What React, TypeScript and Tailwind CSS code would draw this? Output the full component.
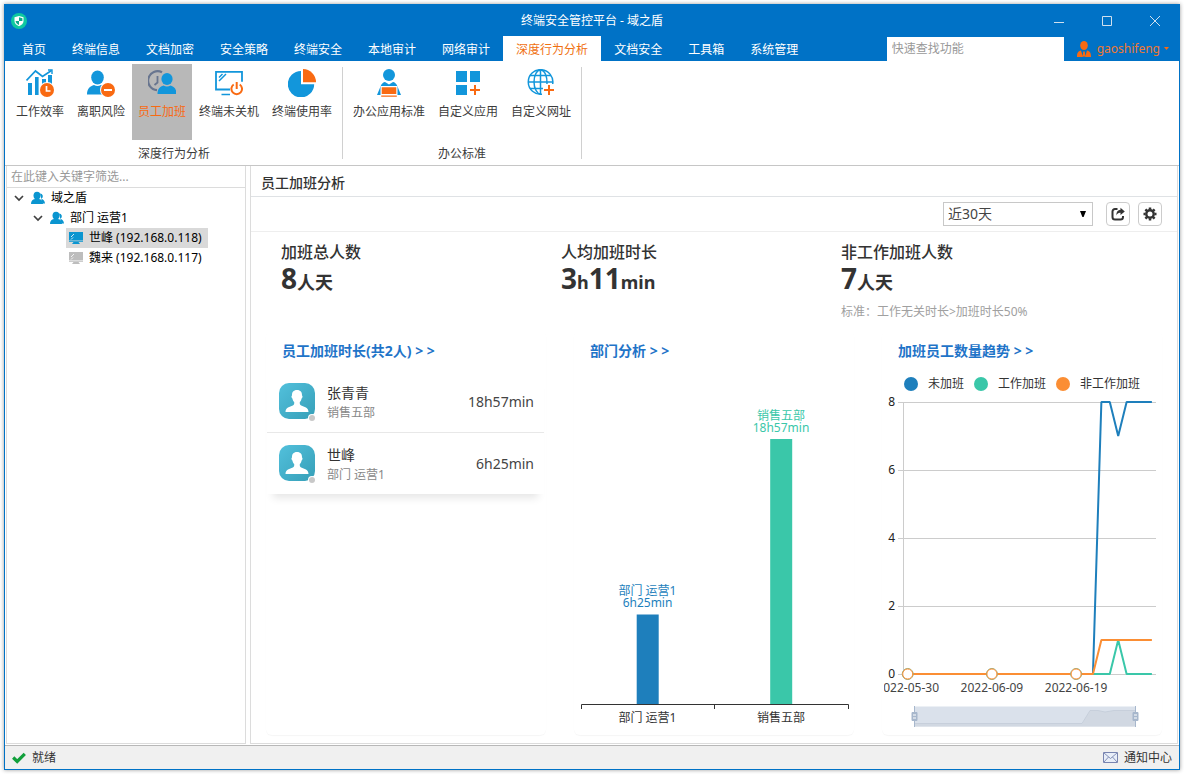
import { useState } from "react";
import type { ReactNode } from "react";

const BLUE = "#1296db";
const ORANGE = "#f96a12";

/* ---------- ribbon icons ---------- */

function Glyph({ children }: { children: ReactNode }) {
  return (
    <svg viewBox="0 0 28 28" className="size-7" aria-hidden="true">
      {children}
    </svg>
  );
}

const EfficiencyIcon = () => (
  <Glyph>
    <path d="M.5 11.500 9.500 2l7 5.500L25.500 1.500" fill="none" stroke={BLUE} strokeWidth="1.700" />
    <path d="M22 1h4v4" fill="none" stroke={BLUE} strokeWidth="1.400" />
    <path d="M2 14h4v12H2zM9 8h3.600v18H9zM16 10h4v8h-4zM22 6h4v12h-4z" fill={BLUE} />
    <circle cx="21" cy="21" r="8" fill="#fff" />
    <circle cx="21" cy="21" r="7" fill={ORANGE} />
    <path d="M20.500 17v5h4" fill="none" stroke="#fff" strokeWidth="1.700" />
  </Glyph>
);

const ResignIcon = () => (
  <Glyph>
    <ellipse cx="10.500" cy="8.500" rx="6.300" ry="7" fill={BLUE} />
    <path d="M0 25.500c0-5.500 3-8.500 7-9.500q3.500 2 7 0c4 1 7 4 7 9.500z" fill={BLUE} />
    <circle cx="21" cy="21" r="8" fill="#fff" />
    <circle cx="21" cy="21" r="7" fill={ORANGE} />
    <path d="M17 21h8" stroke="#fff" strokeWidth="2" />
  </Glyph>
);

const OvertimeIcon = () => (
  <Glyph>
    <path d="M14 3.300A9.500 9.500 0 1 0 9 21.200" fill="none" stroke="#68758f" strokeWidth="2.200" />
    <path d="M9.500 7v6.500L6.500 16" fill="none" stroke="#68758f" strokeWidth="1.800" />
    <ellipse cx="19" cy="10" rx="5.600" ry="6" fill={BLUE} />
    <path d="M9.500 25c0-5 2.500-7.700 6-8.500q3.500 1.800 7 0c3.500.8 6 3.500 6 8.500z" fill={BLUE} />
  </Glyph>
);

const PowerMonitorIcon = () => (
  <Glyph>
    <path d="M15 20.500H1V2.800h26v10" fill="none" stroke={BLUE} strokeWidth="1.800" />
    <path d="M4 12l7-7M4 8.500l3.500-3.500M6.500 25.500H15" fill="none" stroke={BLUE} strokeWidth="1.500" />
    <path d="M18.700 15.500a5.300 5.300 0 1 0 6 0" fill="none" stroke={ORANGE} strokeWidth="2" />
    <path d="M21.700 13v7" stroke={ORANGE} strokeWidth="2" />
  </Glyph>
);

const PieIcon = () => (
  <Glyph>
    <path d="M13 2v13.300h13.200A13.200 13.200 0 1 1 13 2z" fill={BLUE} />
    <path d="M15 0a13.200 13.200 0 0 1 13 13.200H15z" fill={ORANGE} />
  </Glyph>
);

const OfficeIcon = () => (
  <Glyph>
    <circle cx="14" cy="6" r="6" fill={BLUE} />
    <path d="M2 26l3.500-8.500c1-3 3-4.500 4.500-4.500l4 2.500 4-2.500c1.500 0 3.500 1.500 4.500 4.500L26 26z" fill={BLUE} />
    <path d="M5.500 17h17v9.500h-17z" fill="#fff" />
    <path d="M6.700 18.200h14.600V25H6.700zM6.200 26.400h15.600v1.400H6.200z" fill={ORANGE} />
  </Glyph>
);

const AppsIcon = () => (
  <Glyph>
    <path d="M2 2h11v11H2zM16 2h10v11H16zM2 16h11v10H2z" fill={BLUE} />
    <path d="M16 21h10M21 16v10" stroke={ORANGE} strokeWidth="2" />
  </Glyph>
);

const GlobeIcon = () => (
  <Glyph>
    <g fill="none" stroke={BLUE} strokeWidth="1.500">
      <path d="M25.700 15A12.300 12.300 0 1 0 15 25.200" />
      <path d="M20 15c.4-8-2.500-14-6.500-14S7 7 7 13s3 12 6.500 12M13.500 1v24M1 13h25M3 6.500h21M3 19.500h13" />
    </g>
    <path d="M17 21h10M22 16v10" stroke={ORANGE} strokeWidth="2" />
  </Glyph>
);

/* ---------- small icons ---------- */

const PeopleIcon = () => (
  <svg viewBox="0 0 14 14" className="size-3.5 shrink-0" aria-hidden="true">
    <path d="M9 2.500a2.800 2.800 0 0 1 1.500 5.200c2 .6 3.300 2.300 3.500 4.800h-2.500" fill="#0a95d0" />
    <ellipse cx="6" cy="4.600" rx="3.500" ry="3.900" fill="#0a95d0" />
    <path d="M0 13c0-3 1.500-4.500 4-5h4c2.500.5 4 2 4 5z" fill="#0a95d0" />
  </svg>
);

const PcIcon = ({ color }: { color: string }) => (
  <svg viewBox="0 0 14 12" className="h-3 w-3.5 shrink-0" aria-hidden="true">
    <path d="M0 0h14v8.500H0zM0 9.200h14v.8H9.500l1.500 2H3l1.500-2H0z" fill={color} />
    <path d="M2 5l3-3M2 7.500l2-2" stroke="#fff" strokeWidth=".8" />
  </svg>
);

const Chevron = () => (
  <svg viewBox="0 0 10 10" className="size-2.5 shrink-0" aria-hidden="true">
    <path d="M1 3l4 4 4-4" fill="none" stroke="#404040" strokeWidth="1.700" />
  </svg>
);

/* ---------- data ---------- */

const tabs = ["首页", "终端信息", "文档加密", "安全策略", "终端安全", "本地审计", "网络审计", "深度行为分析", "文档安全", "工具箱", "系统管理"];

const groups = [
  {
    title: "深度行为分析",
    items: [
      { label: "工作效率", Icon: EfficiencyIcon },
      { label: "离职风险", Icon: ResignIcon },
      { label: "员工加班", Icon: OvertimeIcon },
      { label: "终端未关机", Icon: PowerMonitorIcon },
      { label: "终端使用率", Icon: PieIcon },
    ],
  },
  {
    title: "办公标准",
    items: [
      { label: "办公应用标准", Icon: OfficeIcon },
      { label: "自定义应用", Icon: AppsIcon },
      { label: "自定义网址", Icon: GlobeIcon },
    ],
  },
];

const people = [
  { name: "张青青", dept: "销售五部", time: "18h57min" },
  { name: "世峰", dept: "部门 运营1", time: "6h25min" },
];

const legend = [
  { label: "未加班", dot: "size-3.5 rounded-full bg-[#1e7fbc]" },
  { label: "工作加班", dot: "size-3.5 rounded-full bg-[#3ac7a9]" },
  { label: "非工作加班", dot: "size-3.5 rounded-full bg-[#fb8e34]" },
];

/* ---------- window chrome ---------- */

function TitleBar() {
  return (
    <div className="grid h-[31px] grid-cols-[1fr_auto_1fr] items-center text-white">
      <svg viewBox="0 0 16 16" className="ml-1.5 size-4" aria-hidden="true">
        <circle cx="8" cy="8" r="8" fill="#0fc8a0" />
        <path d="M8 3l4.500 1.300V8c0 2.600-2 4.200-4.500 5.300C5.500 12.200 3.500 10.600 3.500 8V4.300z" fill="#fff" />
        <path d="M8 4.200l3.400 1V8H8zM8 8v4C6 11 4.600 9.800 4.600 8z" fill="#0fa98c" />
      </svg>
      <h1>终端安全管控平台 - 域之盾</h1>
      <div className="flex justify-end">
        <button aria-label="最小化" className="flex h-[31px] w-12 items-center justify-center">
          <svg viewBox="0 0 12 12" className="size-3"><path d="M1 7.500h10" stroke="#d0e0ee" /></svg>
        </button>
        <button aria-label="最大化" className="flex h-[31px] w-12 items-center justify-center">
          <svg viewBox="0 0 12 12" className="size-3"><path d="M1.500 1.500h9v9h-9z" fill="none" stroke="#d0e0ee" /></svg>
        </button>
        <button aria-label="关闭" className="flex h-[31px] w-12 items-center justify-center">
          <svg viewBox="0 0 12 12" className="size-3"><path d="M1 1l10 10M11 1L1 11" stroke="#d0e0ee" /></svg>
        </button>
      </div>
    </div>
  );
}

function TabBar({ active, onSelect }: { active: string; onSelect: (t: string) => void }) {
  return (
    <div className="flex h-[25px] items-stretch pl-1">
      <nav className="flex">
        {tabs.map((t) => (
          <button
            key={t}
            onClick={() => onSelect(t)}
            className={t === active ? "bg-white px-[13px] pt-0.5 text-[#f07010]" : "px-[13px] pt-0.5 text-white"}
          >
            {t}
          </button>
        ))}
      </nav>
      <input
        aria-label="快速查找功能"
        placeholder="快速查找功能"
        className="mt-px ml-auto w-[177px] bg-white px-[5px] outline-none placeholder:text-[#999]"
      />
      <button className="ml-[13px] flex items-center pr-2.5 text-[#f07830]">
        <svg viewBox="0 0 14 16" className="mr-1.5 h-4 w-3.5" aria-hidden="true">
          <ellipse cx="7" cy="4.500" rx="3.800" ry="4.500" fill={ORANGE} />
          <path d="M0 16c0-4 1-6 4-6.500L6 16zM14 16c0-4-1-6-4-6.500L8 16zM6.200 10.500h1.600L8.300 15 7 16l-1.300-1z" fill={ORANGE} />
        </svg>
        gaoshifeng
        <svg viewBox="0 0 5 3" className="ml-1 h-[3px] w-[5px]" aria-hidden="true"><path d="M0 0h5L2.500 3z" fill={ORANGE} /></svg>
      </button>
    </div>
  );
}

function Ribbon() {
  const [active, setActive] = useState("员工加班");
  return (
    <div className="flex h-[105px] border-b border-[#c6c6c6] bg-white pl-px text-[#3c3c3c]">
      {groups.map((g) => (
        <section key={g.title} className="my-1.5 flex border-r border-[#d0d0d0] px-1">
          <div className="-mt-[3px] flex flex-col">
            <div className="flex gap-px">
              {g.items.map(({ label, Icon }) => (
                <button
                  key={label}
                  onClick={() => setActive(label)}
                  className={
                    label === active
                      ? "flex h-[76px] flex-col items-center bg-[#b8b8b8] px-1.5 pt-[5px] text-[#f96a12]"
                      : "flex h-[76px] flex-col items-center px-1.5 pt-[5px]"
                  }
                >
                  <Icon />
                  <span className="mt-1.5 leading-[18px]">{label}</span>
                </button>
              ))}
            </div>
            <h2 className="mt-1 text-center leading-[20px]">{g.title}</h2>
          </div>
        </section>
      ))}
    </div>
  );
}

/* ---------- left tree ---------- */

function Sidebar() {
  return (
    <aside className="w-60 shrink-0 border-x border-b border-[#dcdcdc]">
      <input
        aria-label="在此键入关键字筛选"
        placeholder="在此键入关键字筛选..."
        className="block h-[22px] w-full border-b border-[#dcdcdc] px-1 outline-none placeholder:text-[#999]"
      />
      <ul className="leading-5 text-black">
        <li>
          <button className="flex h-5 items-center pl-[7px]">
            <Chevron />
            <span className="ml-[7px] flex items-center gap-1.5"><PeopleIcon />域之盾</span>
          </button>
          <ul>
            <li>
              <button className="flex h-5 items-center pl-[26px]">
                <Chevron />
                <span className="ml-[7px] flex items-center gap-1.5"><PeopleIcon />部门 运营1</span>
              </button>
              <ul className="pl-[59px]">
                <li>
                  <button className="flex h-5 items-center gap-1.5 bg-[#d9d9d9] pr-1.5 pl-[3px]">
                    <PcIcon color="#0a95d0" />世峰 (192.168.0.118)
                  </button>
                </li>
                <li>
                  <button className="flex h-5 items-center gap-1.5 pr-1.5 pl-[3px]">
                    <PcIcon color="#bdbdbd" />魏来 (192.168.0.117)
                  </button>
                </li>
              </ul>
            </li>
          </ul>
        </li>
      </ul>
    </aside>
  );
}

/* ---------- analysis panel ---------- */

function Card({ title, children }: { title: string; children: ReactNode }) {
  return (
    <section className="flex flex-col rounded-md shadow-[0_1px_1px_rgba(0,0,0,0.04)]">
      <h3 className="flex h-[42px] items-center px-4 text-sm font-bold text-[#1f74c8]">
        <a href="#">{title}</a>
      </h3>
      {children}
    </section>
  );
}

function Avatar() {
  return (
    <svg viewBox="0 0 38 38" className="size-[38px] shrink-0" aria-hidden="true">
      <defs>
        <linearGradient id="avatar" x1="0" y1="0" x2="1" y2="1">
          <stop offset="0" stopColor="#52c0dc" />
          <stop offset="1" stopColor="#369fb8" />
        </linearGradient>
      </defs>
      <rect width="36" height="36" rx="10" fill="url(#avatar)" />
      <path
        d="M18 7c3.600 0 5.200 2.300 5 5.500.8.200.7 2.300-.4 3-.4 1.800-1 2.800-1.800 3.600-.2 2 .2 2.900 1.400 3.500 3 1.300 7.300 2 7.300 6.400H6.500c0-4.400 4.300-5.100 7.300-6.400 1.200-.6 1.600-1.500 1.400-3.500-.8-.8-1.400-1.800-1.800-3.600-1.100-.7-1.200-2.800-.4-3-.2-3.200 1.400-5.500 5-5.500z"
        fill="#fff"
      />
      <circle cx="33" cy="35" r="4" fill="#fff" />
      <circle cx="33" cy="35" r="3" fill="#c8c8c8" />
    </svg>
  );
}

function PeopleList() {
  return (
    <ul className="mr-0.5 ml-px shadow-[0_10px_8px_-6px_rgba(0,0,0,0.1)]">
      {people.map((p, i) => (
        <li
          key={p.name}
          className={
            i === 0
              ? "flex h-[61px] items-center border-b border-[#e8e8e8] pr-2.5 pl-3"
              : "flex h-[61px] items-center pr-2.5 pl-3"
          }
        >
          <Avatar />
          <div className="ml-2.5 pt-0.5 leading-5">
            <p className="text-sm leading-5 text-[#333]">{p.name}</p>
            <p className="text-[#888]">{p.dept}</p>
          </div>
          <span className="ml-auto text-sm text-[#444]">{p.time}</span>
        </li>
      ))}
    </ul>
  );
}

function BarChart() {
  return (
    <svg viewBox="0 0 280 363" className="w-full" fontSize="12" textAnchor="middle" role="img" aria-label="部门分析">
      <rect x="62.700" y="242.500" width="22" height="90" fill="#1e7fbc" />
      <rect x="196.200" y="67" width="22" height="265.500" fill="#3ac7a9" />
      <path d="M7.500 337v-4.500h267v4.500M140.500 332.500v4.500" fill="none" stroke="#333" />
      <g fill="#1e7fbc">
        <text x="73.500" y="223">部门 运营1</text>
        <text x="73.500" y="235">6h25min</text>
      </g>
      <g fill="#3ac7a9">
        <text x="207" y="48">销售五部</text>
        <text x="207" y="60">18h57min</text>
      </g>
      <g fill="#333">
        <text x="73.500" y="350">部门 运营1</text>
        <text x="207" y="350">销售五部</text>
      </g>
    </svg>
  );
}

const px = (i: number) => 21.5 + 8.42 * (i + 0.5);
const py = (v: number) => 302 - 34 * v;
const line = (values: number[]) => values.map((v, i) => `${px(i)},${py(v)}`).join(" ");
const zeros = (n: number): number[] => Array(n).fill(0);

const noOvertime = [...zeros(23), 8, 8, 7, 8, 8, 8, 8];
const workOvertime = [...zeros(25), 1, 0, 0, 0, 0];
const idleOvertime = [...zeros(23), 1, 1, 1, 1, 1, 1, 1];

function TrendChart() {
  return (
    <svg viewBox="0 24 280 339" className="w-full" fontSize="12" role="img" aria-label="加班员工数量趋势">
      <clipPath id="plot"><path d="M2 0h278v363H2z" /></clipPath>
      <g stroke="#ccc">
        {[8, 6, 4, 2, 0].map((v) => (
          <path key={v} d={`M16 ${py(v) + 0.5}h258`} />
        ))}
        <path d="M21.500 30v273" />
      </g>
      <g fill="#222" textAnchor="end">
        {[8, 6, 4, 2, 0].map((v) => (
          <text key={v} x="13" y={py(v) + 4}>{v}</text>
        ))}
      </g>
      <g fill="none" strokeWidth="2" strokeLinejoin="bevel">
        <polyline points={line(noOvertime)} stroke="#1e7fbc" />
        <polyline points={line(workOvertime)} stroke="#3ac7a9" />
        <polyline points={line(idleOvertime)} stroke="#fb8e34" />
      </g>
      {[0, 10, 20].map((i) => (
        <g key={i}>
          <circle cx={px(i)} cy={py(0)} r="5.500" fill="#fff" stroke="#8fae7c" />
          <circle cx={px(i)} cy={py(0)} r="5" fill="#fff" stroke="#fb8e34" />
        </g>
      ))}
      <g fill="#444" textAnchor="middle" clipPath="url(#plot)">
        <text x={px(0)} y="320">2022-05-30</text>
        <text x={px(10)} y="320">2022-06-09</text>
        <text x={px(20)} y="320">2022-06-19</text>
      </g>
      <rect x="32" y="334.500" width="222" height="20" fill="#dae1eb" />
      <path d="M32 351.500h168l8-13h8l7 1.500 9-1.500h22v16H32z" fill="#d1d8e2" />
      <path d="M32 351.500h168l8-13h8l7 1.500 9-1.500h22" fill="none" stroke="#c3ccd8" strokeWidth=".8" />
      <g stroke="#a7b7cc" fill="#a7b7cc">
        <path d="M32.500 334v21M253.500 334v21" fill="none" />
        <path d="M30 340.500h5v8h-5zM251 340.500h5v8h-5z" />
        <path d="M31 343h3M31 346h3M252 343h3M252 346h3" stroke="#fff" />
      </g>
    </svg>
  );
}

function Unit({ children }: { children: ReactNode }) {
  return <span className="text-lg leading-none">{children}</span>;
}

function Stat({ label, children, note }: { label: string; children: ReactNode; note?: string }) {
  return (
    <div>
      <h3 className="text-base leading-6 font-medium">{label}</h3>
      <p className="h-[30px] text-[28px] leading-[28px] font-bold">{children}</p>
      {note && <p className="mt-2 leading-5 text-[#a0a0a0]">{note}</p>}
    </div>
  );
}

function Analysis() {
  return (
    <main className="flex min-w-0 flex-1 flex-col border-x border-b border-[#dcdcdc] text-[#333]">
      <h2 className="flex h-[31px] items-center border-b border-[#dfe2e5] px-2.5 pt-1 text-sm font-medium">员工加班分析</h2>
      <div className="flex h-[35px] items-center justify-end gap-2 border-b border-[#eee] pr-[15px]">
        <div className="relative mr-[5px]">
          <select
            aria-label="统计周期"
            className="h-6 w-[150px] appearance-none border border-[#c8c8c8] bg-white px-1 text-sm leading-5 text-[#444]"
          >
            <option>近30天</option>
            <option>近7天</option>
          </select>
          <svg viewBox="0 0 6 6" className="pointer-events-none absolute top-[9px] right-[7px] size-1.5" aria-hidden="true">
            <path d="M0 0h6L3.600 6H2.400z" fill="#000" />
          </svg>
        </div>
        <button aria-label="导出" className="flex size-6 items-center justify-center rounded border border-[#ccc]">
          <svg viewBox="0 0 14 14" className="size-3.5" aria-hidden="true">
            <path d="M6.500 2H4a2.500 2.500 0 0 0-2.500 2.500v5.500A2.500 2.500 0 0 0 4 12.500h5.500A2.500 2.500 0 0 0 12 10V9" fill="none" stroke="#333" strokeWidth="2" />
            <path d="M9.500.7l4.300 3.700-4.300 3.700V5.800C7.500 5.600 6.300 6.500 5.300 8.500c0-3.500 1.500-5.500 4.200-5.700z" fill="#333" />
          </svg>
        </button>
        <button aria-label="设置" className="flex size-6 items-center justify-center rounded border border-[#ccc]">
          <svg viewBox="0 0 14 14" className="size-3.5" aria-hidden="true">
            <circle cx="7" cy="7" r="3.700" fill="none" stroke="#333" strokeWidth="2.400" />
            <path d="M7 .5v2M7 11.500v2M.5 7h2M11.500 7h2M2.400 2.400l1.500 1.500M10.100 10.100l1.500 1.500M2.400 11.600l1.500-1.500M10.100 3.900l1.500-1.500" stroke="#333" strokeWidth="2.500" />
          </svg>
        </button>
      </div>
      <div className="grid h-[98px] grid-cols-3 pt-2 pr-14 pl-[30px]">
        <Stat label="加班总人数">8<Unit>人天</Unit></Stat>
        <Stat label="人均加班时长">3<Unit>h</Unit>11<Unit>min</Unit></Stat>
        <Stat label="非工作加班人数" note={"标准\uff1a工作无关时长>加班时长50%"}>7<Unit>人天</Unit></Stat>
      </div>
      <div className="mb-2 grid flex-1 grid-cols-3 gap-7 px-[15px]">
        <Card title="员工加班时长(共2人) > >">
          <PeopleList />
        </Card>
        <Card title="部门分析 > >">
          <BarChart />
        </Card>
        <Card title="加班员工数量趋势 > >">
          <ul className="flex h-6 items-center gap-2.5 pl-[22px]">
            {legend.map((l) => (
              <li key={l.label} className="flex items-center gap-2.5">
                <span className={l.dot} />
                {l.label}
              </li>
            ))}
          </ul>
          <TrendChart />
        </Card>
      </div>
    </main>
  );
}

export default function App() {
  const [tab, setTab] = useState("深度行为分析");
  return (
    <div className="flex min-h-screen bg-white p-1 font-['Noto_Sans','Noto_Sans_CJK_SC',sans-serif] text-xs">
      <div className="flex min-w-0 flex-1 flex-col border border-[#0072c6] bg-white shadow-[0_0_4px_rgba(0,0,0,0.4)]">
        <header className="bg-[#0072c6]">
          <TitleBar />
          <TabBar active={tab} onSelect={setTab} />
        </header>
        <Ribbon />
        <div className="flex flex-1 gap-1 pr-px pb-px pl-px">
          <Sidebar />
          <Analysis />
        </div>
        <footer className="flex h-6 items-center justify-between border-t border-[#b8b8b8] bg-[#f0f0f0] px-[7px] text-[#333]">
          <span className="flex items-center gap-1.5">
            <svg viewBox="0 0 14 12" className="h-3 w-3.5" aria-hidden="true">
              <path d="M1.200 5.500l4 4 7.600-7.600" fill="none" stroke="#12a03c" strokeWidth="3.200" />
            </svg>
            就绪
          </span>
          <button className="flex items-center gap-1.5">
            <svg viewBox="0 0 15 11" className="h-[11px] w-[15px]" aria-hidden="true">
              <path d="M.5.500h14v10H.500z" fill="#e8eef8" stroke="#7884b0" />
              <path d="M1 1l6.500 5.500L14 1M1 10l4.500-5M14 10L9.500 5" fill="none" stroke="#7884b0" strokeWidth=".9" />
            </svg>
            通知中心
          </button>
        </footer>
      </div>
    </div>
  );
}
